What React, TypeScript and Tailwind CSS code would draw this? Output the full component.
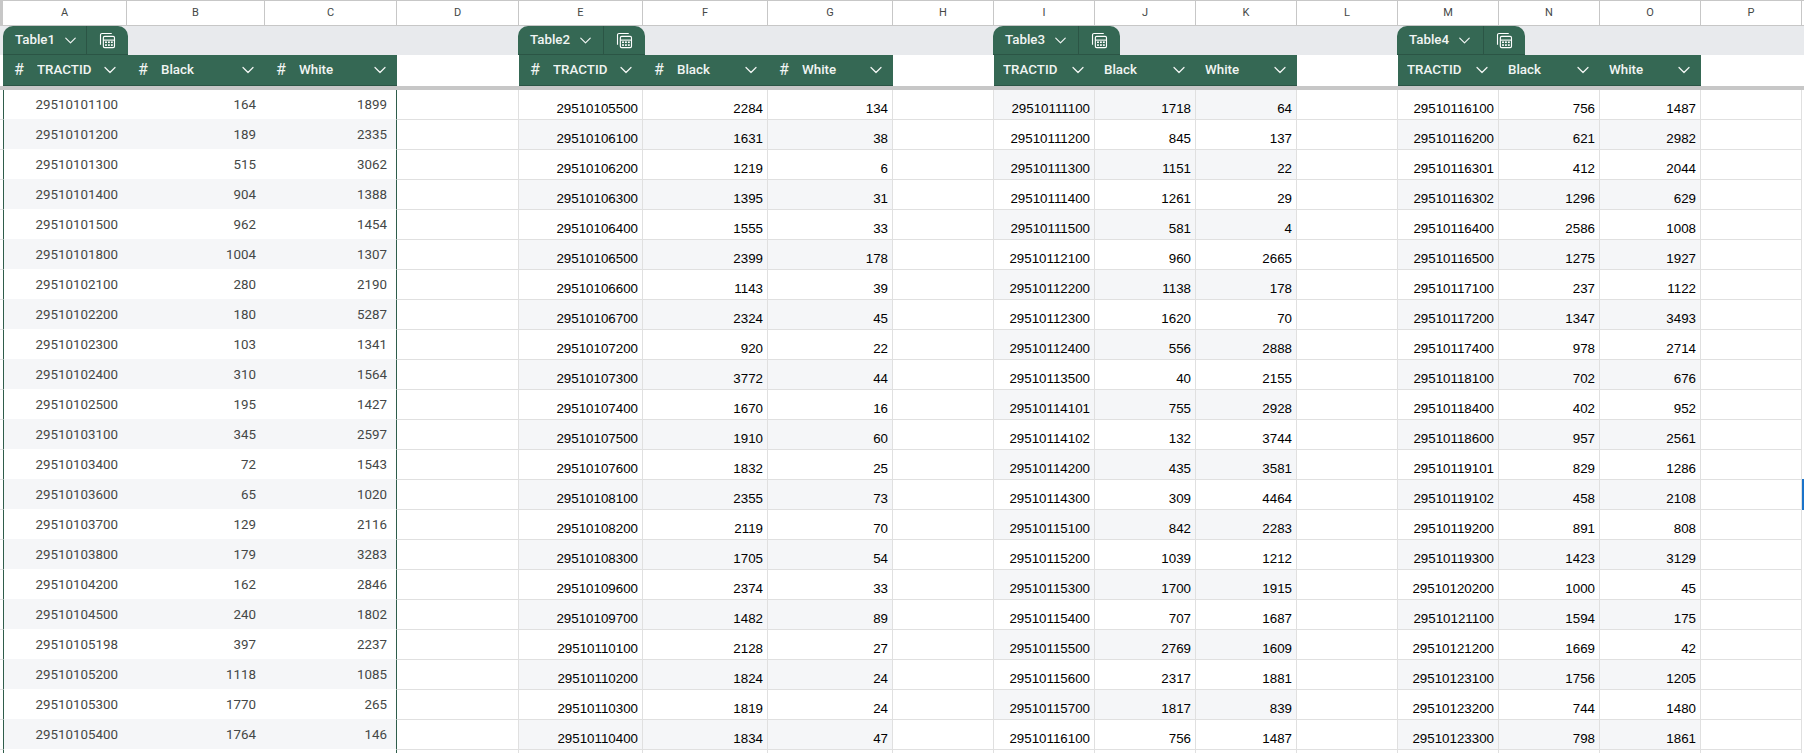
import React from "react";
import { ChevronDown } from "lucide-react";

const COLS = "grid grid-cols-[3px_124px_138px_132px_122px_124px_125px_125px_101px_101px_101px_101px_101px_101px_101px_101px_101px_2px]";

const letters = ["A","B","C","D","E","F","G","H","I","J","K","L","M","N","O","P"];

const t1 = `29510101100 164 1899|29510101200 189 2335|29510101300 515 3062|29510101400 904 1388|29510101500 962 1454|29510101800 1004 1307|29510102100 280 2190|29510102200 180 5287|29510102300 103 1341|29510102400 310 1564|29510102500 195 1427|29510103100 345 2597|29510103400 72 1543|29510103600 65 1020|29510103700 129 2116|29510103800 179 3283|29510104200 162 2846|29510104500 240 1802|29510105198 397 2237|29510105200 1118 1085|29510105300 1770 265|29510105400 1764 146`;
const t2 = `29510105500 2284 134|29510106100 1631 38|29510106200 1219 6|29510106300 1395 31|29510106400 1555 33|29510106500 2399 178|29510106600 1143 39|29510106700 2324 45|29510107200 920 22|29510107300 3772 44|29510107400 1670 16|29510107500 1910 60|29510107600 1832 25|29510108100 2355 73|29510108200 2119 70|29510108300 1705 54|29510109600 2374 33|29510109700 1482 89|29510110100 2128 27|29510110200 1824 24|29510110300 1819 24|29510110400 1834 47`;
const t3 = `29510111100 1718 64|29510111200 845 137|29510111300 1151 22|29510111400 1261 29|29510111500 581 4|29510112100 960 2665|29510112200 1138 178|29510112300 1620 70|29510112400 556 2888|29510113500 40 2155|29510114101 755 2928|29510114102 132 3744|29510114200 435 3581|29510114300 309 4464|29510115100 842 2283|29510115200 1039 1212|29510115300 1700 1915|29510115400 707 1687|29510115500 2769 1609|29510115600 2317 1881|29510115700 1817 839|29510116100 756 1487`;
const t4 = `29510116100 756 1487|29510116200 621 2982|29510116301 412 2044|29510116302 1296 629|29510116400 2586 1008|29510116500 1275 1927|29510117100 237 1122|29510117200 1347 3493|29510117400 978 2714|29510118100 702 676|29510118400 402 952|29510118600 957 2561|29510119101 829 1286|29510119102 458 2108|29510119200 891 808|29510119300 1423 3129|29510120200 1000 45|29510121100 1594 175|29510121200 1669 42|29510123100 1756 1205|29510123200 744 1480|29510123300 798 1861`;

const parse = (s: string) => s.split("|").map((r) => r.split(" "));
const d1 = parse(t1), d2 = parse(t2), d3 = parse(t3), d4 = parse(t4);

function StatsIcon() {
  return (
    <svg width="17" height="17" viewBox="0 0 18 18" fill="none" stroke="#fff" strokeWidth="1.2">
      <path d="M1.6 13.5V3.2a1.6 1.6 0 0 1 1.6-1.6h10.3" />
      <rect x="4.6" y="4.6" width="11.8" height="12" rx="1.4" />
      <path d="M4.6 8.6h11.8" />
      <g fill="#fff" stroke="none">
        <rect x="6.4" y="10" width="2" height="1.7" />
        <rect x="9.5" y="10" width="2" height="1.7" />
        <rect x="12.6" y="10" width="2" height="1.7" />
        <rect x="6.4" y="13" width="2" height="1.7" />
        <rect x="9.5" y="13" width="2" height="1.7" />
        <rect x="12.6" y="13" width="2" height="1.7" />
      </g>
    </svg>
  );
}

function Tab({ name, col, w1, w2 }: { name: string; col: string; w1: string; w2: string }) {
  return (
    <div className={`${col} flex h-[29px] w-max bg-[#356854] rounded-t-[10px] border-b border-[#2b5545] text-[#f1f5f3] font-medium text-[13.33px] font-['Roboto',sans-serif]`}>
      <div className={`${w1} flex items-center pl-[12px] gap-[6px] border-r border-[#2b5545]`}>
        <span>{name}</span>
        <ChevronDown size={19} strokeWidth={1.5} />
      </div>
      <div className={`${w2} flex items-center justify-center`}>
        <StatsIcon />
      </div>
    </div>
  );
}

function Head({ label, hash }: { label: string; hash: boolean }) {
  return (
    <div className="h-[31px] bg-[#356854] border-b border-[#2b5545] flex items-center pl-[9px] pr-[7px] text-[#f1f5f3] font-medium text-[13.33px] font-['Roboto',sans-serif]">
      {hash && <span className="w-[25px] pl-[2px] shrink-0 text-[16px] font-normal">#</span>}
      <span className="flex-1 truncate">{label}</span>
      <ChevronDown size={20} strokeWidth={1.5} className="shrink-0" />
    </div>
  );
}

const HeadGroup = ({ hash }: { hash: boolean }) => (
  <>
    <Head label="TRACTID" hash={hash} />
    <Head label="Black" hash={hash} />
    <Head label="White" hash={hash} />
  </>
);

const Blank = () => <div className="h-[31px]" />;

function Plain({ v, band }: { v: string; band: boolean }) {
  return (
    <div className={`h-[30px] flex items-end justify-end pr-[4px] pb-[3px] border-r border-b border-[#e0e0e0] text-[13.33px] leading-[15px] text-black font-['Liberation_Sans',sans-serif] ${band ? "bg-[#f5f6f8]" : "bg-white"}`}>
      {v}
    </div>
  );
}

function Styled({ v, band, first, last }: { v: string; band: boolean; first?: boolean; last?: boolean }) {
  return (
    <div className={`h-[30px] flex items-center justify-end pr-[9px] border-b text-[13.33px] text-[#444746] font-['Roboto',sans-serif] ${band ? "bg-[#f5f6f8] border-b-white" : "bg-white border-b-[#f5f6f8]"} ${first ? "border-l border-l-[#2f5d4b]" : ""} ${last ? "border-r border-r-[#2f5d4b]" : ""}`}>
      {v}
    </div>
  );
}

const Gap = () => <div className="h-[30px] border-r border-b border-[#e0e0e0] bg-white" />;

export default function App() {
  return (
    <div className="w-[1804px] h-[753px] overflow-hidden bg-white">
      <div className={`${COLS} border-t border-[#c7c7c7]`}>
        <div className="h-[25px] bg-[#c7c7c7]" />
        {letters.map((l) => (
          <div key={l} className="h-[25px] flex items-center justify-center border-r border-b border-[#c7c7c7] text-[11px] text-[#444746] font-['Roboto',sans-serif]">
            {l}
          </div>
        ))}
        <div className="h-[25px] border-b border-[#c7c7c7]" />
      </div>

      <div className={`${COLS} bg-[#e8eaed] h-[29px]`}>
        <Tab name="Table1" col="col-start-2" w1="w-[84px]" w2="w-[41px]" />
        <Tab name="Table2" col="col-start-6 -ml-px" w1="w-[86px]" w2="w-[41px]" />
        <Tab name="Table3" col="col-start-10 -ml-px" w1="w-[86px]" w2="w-[41px]" />
        <Tab name="Table4" col="col-start-14 -ml-px" w1="w-[87px]" w2="w-[41px]" />
      </div>

      <div className={COLS}>
        <div className="h-[31px]" />
        <HeadGroup hash />
        <Blank />
        <HeadGroup hash />
        <Blank />
        <HeadGroup hash={false} />
        <Blank />
        <HeadGroup hash={false} />
        <Blank />
        <Blank />
      </div>

      <div className="h-[4px] bg-[#c7c7c7]" />

      <div className={COLS}>
        {Array.from({ length: 23 }).map((_, i) => {
          const r1 = d1[i], r2 = d2[i], r3 = d3[i], r4 = d4[i];
          const even = i % 2 === 1;
          return (
            <React.Fragment key={i}>
              <div className="h-[30px] border-b border-[#e0e0e0]" />
              {r1 ? (
                <>
                  <Styled v={r1[0]} band={even} first />
                  <Styled v={r1[1]} band={even} />
                  <Styled v={r1[2]} band={even} last />
                </>
              ) : (
                <>
                  <Styled v="" band={false} first />
                  <Styled v="" band={false} />
                  <Styled v="" band={false} last />
                </>
              )}
              <Gap />
              {[r2, r3, r4].map((r, k) => (
                <React.Fragment key={k}>
                  {[0, 1, 2].map((c) => (
                    <Plain key={c} v={r ? r[c] : ""} band={!!r && (k === 1 ? !even : even)} />
                  ))}
                  <Gap />
                </React.Fragment>
              ))}
              <div className="h-[30px] relative">
                {i === 13 && <div className="absolute -top-px left-0 right-0 h-[31px] border-l-2 border-y-2 border-[#1a73c9]" />}
              </div>
            </React.Fragment>
          );
        })}
      </div>
    </div>
  );
}
